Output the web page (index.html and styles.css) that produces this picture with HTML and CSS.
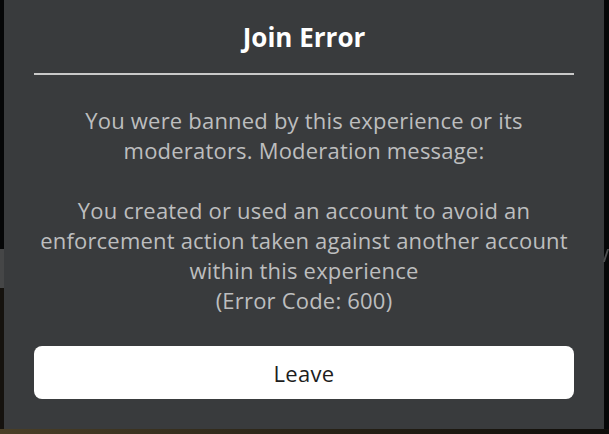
FILE: index.html
```html
<!DOCTYPE html>
<html>
<head>
<meta charset="utf-8">
<link rel="stylesheet" href="styles.css">
</head>
<body>
<div class="scene">
  <div class="dialog">
    <div class="title">Join Error</div>
    <div class="divider"></div>
    <div class="message">
      <p>You were banned by this experience or its moderators. Moderation message:</p>
      <p>You created or used an account to avoid an enforcement action taken against another account within this experience<br>(Error Code: 600)</p>
    </div>
    <button class="leave">Leave</button>
  </div>
  <div class="peek"></div>
</div>
</body>
</html>
```
FILE: styles.css
```css
html, body {
  margin: 0;
  padding: 0;
  background: #060708;
}
.scene {
  position: relative;
  width: 609px;
  height: 434px;
  overflow: hidden;
  display: flex;
  align-items: flex-start;
  padding-left: 4px;
  box-sizing: border-box;
  background:
    linear-gradient(to right, #4a3f27, #2c2619 45%, #0f0d0a) left bottom / 100% 5px no-repeat,
    linear-gradient(#050607 0 249px, #454647 249px 288px, #15120e 288px) left top / 4px 100% no-repeat,
    #060708;
}
.dialog {
  width: 600px;
  height: 429px;
  background: #393b3d;
  box-sizing: border-box;
  padding: 0 30px 30px;
  display: flex;
  flex-direction: column;
  font-family: "Open Sans", Lato, sans-serif;
}
.title {
  height: 73px;
  display: flex;
  align-items: center;
  justify-content: center;
  color: #ffffff;
  font-weight: 700;
  font-size: 26px;
}
.divider {
  height: 2px;
  background: #c9c9c9;
}
.message {
  margin-top: 30px;
  color: #bdbebf;
  font-size: 22px;
  letter-spacing: 0.2px;
  line-height: 30px;
  text-align: center;
}
.message p {
  margin: 0;
}
.message p + p {
  margin-top: 30px;
}
.leave {
  margin-top: auto;
  height: 53px;
  border: none;
  border-radius: 8px;
  background: #ffffff;
  color: #1d1d1d;
  font-family: "Open Sans", Lato, sans-serif;
  font-size: 22px;
  letter-spacing: 0.3px;
  padding: 0;
}
.peek {
  position: absolute;
  left: 605px;
  top: 249px;
  width: 2px;
  height: 13px;
  background: #4c4d4e;
  transform: skewX(-18deg);
}
```
